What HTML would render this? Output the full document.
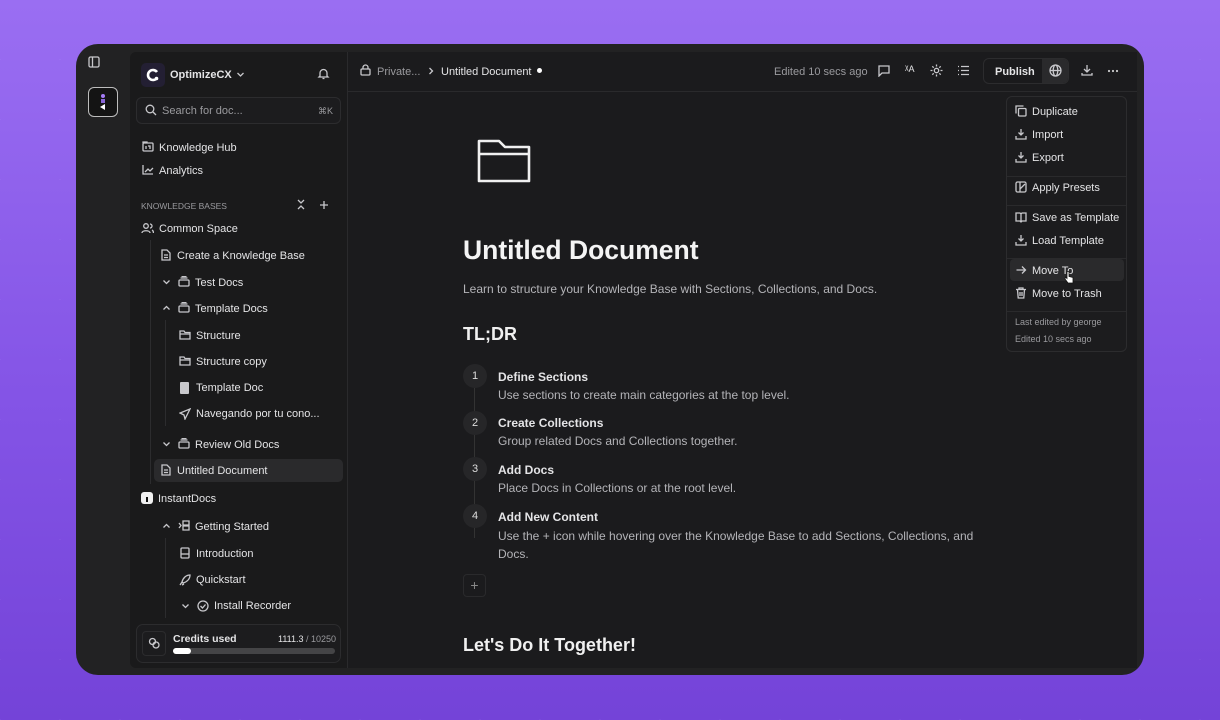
<!DOCTYPE html>
<html><head><meta charset="utf-8"><style>
*{box-sizing:border-box;margin:0;padding:0}
body{width:1220px;height:720px;overflow:hidden;font-family:"Liberation Sans",sans-serif;background:linear-gradient(180deg,#9a6ef2 0%,#8454e6 55%,#7443d8 100%);position:relative}
.pat{position:absolute;inset:0;background-image:linear-gradient(45deg,rgba(255,255,255,.05) 1px,transparent 1px),linear-gradient(-45deg,rgba(255,255,255,.05) 1px,transparent 1px);background-size:60px 60px}
.win{position:absolute;left:76px;top:44px;width:1068px;height:631px;border-radius:22px;background:#222223}
.a{position:absolute}
.side{position:absolute;left:130px;top:52px;width:218px;height:616px;background:#1a1a1b;border-right:1px solid #2a2a2c;border-radius:6px 0 0 6px}
.main{position:absolute;left:348px;top:52px;width:789px;height:616px;background:#1b1b1d}
.t{position:absolute;font-size:11px;color:#e4e4e6;white-space:nowrap;margin-top:1px}
.ic{position:absolute;stroke:#c8c8cc;fill:none;stroke-width:1.3}
.muted{color:#9a9a9e}
.menu{position:absolute;left:1006px;top:96px;width:121px;height:256px;background:#1c1c1e;border:1px solid #2c2c2e;border-radius:6px}
.sep{position:absolute;left:0;right:0;height:1px;background:#2a2a2c}
</style></head><body>
<div class="pat"></div>
<div class="win"></div>
<svg class="ic" style="left:88px;top:56px" width="12" height="12" viewBox="0 0 12 12"><rect x="1" y="1" width="10" height="10" rx="1.5"/><line x1="4.5" y1="1" x2="4.5" y2="11"/></svg>
<div class="a" style="left:88px;top:87px;width:30px;height:30px;border:1.5px solid #bdbdbd;border-radius:6px;background:#141414"></div>
<div class="a" style="left:101px;top:94px;width:4px;height:4px;border-radius:50%;background:#a57cf5"></div>
<div class="a" style="left:101px;top:99px;width:4px;height:4px;background:#8a66d8"></div>
<div class="a" style="left:100px;top:104px;width:0;height:0;border-top:3px solid transparent;border-bottom:3px solid transparent;border-right:5px solid #fff"></div>

<div class="side"></div>
<div class="a" style="left:141px;top:63px;width:24px;height:24px;border-radius:5px;background:#231f33"></div>
<svg class="a" style="left:146px;top:68px" width="14" height="14" viewBox="0 0 14 14"><path d="M11 4 A5 5 0 1 0 11 10" stroke="#fff" stroke-width="2.6" fill="none"/><circle cx="10.5" cy="10.5" r="1.8" fill="#fff"/></svg>
<div class="t" style="left:170px;top:68px;font-weight:bold;font-size:11px">OptimizeCX</div>
<svg class="ic" style="left:236px;top:70px" width="9" height="9" viewBox="0 0 9 9"><path d="M1.5 3l3 3 3-3"/></svg>
<svg class="ic" style="left:317px;top:67px" width="13" height="13" viewBox="0 0 13 13"><path d="M3 9V6a3.5 3.5 0 0 1 7 0v3l1 1H2z M5.5 11.5h2"/></svg>
<div class="a" style="left:136px;top:97px;width:205px;height:27px;border:1px solid #2c2c2e;border-radius:6px;background:#1c1c1e"></div>
<svg class="ic" style="left:145px;top:104px" width="12" height="12" viewBox="0 0 12 12"><circle cx="5" cy="5" r="3.8"/><path d="M8 8l3 3"/></svg>
<div class="t muted" style="left:162px;top:104px">Search for doc...</div>
<div class="t muted" style="left:318px;top:105px;font-size:9px">⌘K</div>
<svg class="ic" style="left:142px;top:141px" width="12" height="11" viewBox="0 0 12 11"><rect x="1" y="2" width="10" height="8" rx="1"/><path d="M1 2V1h4v1 M4 5v3 M6 5h2v3"/></svg>
<div class="t" style="left:159px;top:141px">Knowledge Hub</div>
<svg class="ic" style="left:142px;top:164px" width="12" height="11" viewBox="0 0 12 11"><path d="M1 1v9h10 M3 8l3-3 2 2 3-3"/></svg>
<div class="t" style="left:159px;top:164px">Analytics</div>
<div class="t muted" style="left:141px;top:200px;font-size:8.5px">KNOWLEDGE BASES</div>
<svg class="ic" style="left:296px;top:199px" width="10" height="11" viewBox="0 0 10 11"><path d="M2 1l3 3 3-3 M2 10l3-3 3 3"/></svg>
<svg class="ic" style="left:319px;top:200px" width="10" height="10" viewBox="0 0 10 10"><path d="M5 1v8 M1 5h8"/></svg>
<svg class="ic" style="left:141px;top:222px" width="13" height="12" viewBox="0 0 13 12"><circle cx="5" cy="4" r="2.3"/><path d="M1 11c0-3 8-3 8 0 M9 2a2 2 0 0 1 0 4 M11 8c1 .5 1.5 1.5 1.5 3"/></svg>
<div class="t" style="left:159px;top:222px">Common Space</div>
<div class="a" style="left:150px;top:240px;width:1px;height:244px;background:#2c2c2e"></div>
<svg class="ic" style="left:161px;top:249px" width="10" height="12" viewBox="0 0 10 12"><path d="M1 1h5l3 3v7H1z M3 6h4 M3 8.5h4"/></svg>
<div class="t" style="left:177px;top:249px">Create a Knowledge Base</div>
<svg class="ic" style="left:162px;top:278px" width="9" height="8" viewBox="0 0 9 8"><path d="M1.5 2.5l3 3 3-3"/></svg>
<svg class="ic" style="left:178px;top:276px" width="12" height="11" viewBox="0 0 12 11"><rect x="1" y="4" width="10" height="6" rx="1"/><path d="M2.5 2h7 M3.5 0.5h5"/></svg>
<div class="t" style="left:195px;top:276px">Test Docs</div>
<svg class="ic" style="left:162px;top:304px" width="9" height="8" viewBox="0 0 9 8"><path d="M1.5 5.5l3-3 3 3"/></svg>
<svg class="ic" style="left:178px;top:302px" width="12" height="11" viewBox="0 0 12 11"><rect x="1" y="4" width="10" height="6" rx="1"/><path d="M2.5 2h7 M3.5 0.5h5"/></svg>
<div class="t" style="left:195px;top:302px">Template Docs</div>
<div class="a" style="left:165px;top:320px;width:1px;height:106px;background:#2c2c2e"></div>
<svg class="ic" style="left:179px;top:330px" width="12" height="10" viewBox="0 0 12 10"><path d="M1 1h4l1 1.5h5V9H1z M1 4h10"/></svg>
<div class="t" style="left:196px;top:329px">Structure</div>
<svg class="ic" style="left:179px;top:356px" width="12" height="10" viewBox="0 0 12 10"><path d="M1 1h4l1 1.5h5V9H1z M1 4h10"/></svg>
<div class="t" style="left:196px;top:355px">Structure copy</div>
<div class="a" style="left:180px;top:382px;width:9px;height:12px;background:#c8c8cc;border-radius:1px"></div>
<div class="t" style="left:196px;top:381px">Template Doc</div>
<svg class="ic" style="left:179px;top:408px" width="12" height="12" viewBox="0 0 12 12"><path d="M11 1L1 5l4 2 1 4z"/></svg>
<div class="t" style="left:196px;top:407px">Navegando por tu cono...</div>
<svg class="ic" style="left:162px;top:440px" width="9" height="8" viewBox="0 0 9 8"><path d="M1.5 2.5l3 3 3-3"/></svg>
<svg class="ic" style="left:178px;top:438px" width="12" height="11" viewBox="0 0 12 11"><rect x="1" y="4" width="10" height="6" rx="1"/><path d="M2.5 2h7 M3.5 0.5h5"/></svg>
<div class="t" style="left:195px;top:438px">Review Old Docs</div>
<div class="a" style="left:154px;top:459px;width:189px;height:23px;border-radius:5px;background:#2a2a2c"></div>
<svg class="ic" style="left:161px;top:464px" width="10" height="12" viewBox="0 0 10 12"><path d="M1 1h5l3 3v7H1z M3 6h4 M3 8.5h4"/></svg>
<div class="t" style="left:177px;top:464px">Untitled Document</div>
<div class="a" style="left:141px;top:492px;width:12px;height:12px;border-radius:3px;background:#f0f0f0"></div>
<div class="a" style="left:146px;top:497px;width:2px;height:5px;background:#111"></div>
<div class="t" style="left:158px;top:492px">InstantDocs</div>
<svg class="ic" style="left:162px;top:522px" width="9" height="8" viewBox="0 0 9 8"><path d="M1.5 5.5l3-3 3 3"/></svg>
<svg class="ic" style="left:178px;top:520px" width="12" height="11" viewBox="0 0 12 11"><path d="M1 3l2 2.5L1 8 M5 1h6v4H5z M5 6h6v4H5z"/></svg>
<div class="t" style="left:195px;top:520px">Getting Started</div>
<div class="a" style="left:165px;top:538px;width:1px;height:80px;background:#2c2c2e"></div>
<svg class="ic" style="left:180px;top:547px" width="10" height="12" viewBox="0 0 10 12"><rect x="1" y="1" width="8" height="10" rx="1"/><path d="M1 7h8"/></svg>
<div class="t" style="left:196px;top:547px">Introduction</div>
<svg class="ic" style="left:179px;top:574px" width="12" height="12" viewBox="0 0 12 12"><path d="M11 1C7 1 4 4 3 8l1 1c4-1 7-4 7-8z M3 8l-2 3 M5 10l-2 1"/></svg>
<div class="t" style="left:196px;top:573px">Quickstart</div>
<svg class="ic" style="left:181px;top:602px" width="9" height="8" viewBox="0 0 9 8"><path d="M1.5 2.5l3 3 3-3"/></svg>
<svg class="ic" style="left:197px;top:600px" width="12" height="12" viewBox="0 0 12 12"><circle cx="6" cy="6" r="5"/><path d="M3.5 6l2 2 3-3.5"/></svg>
<div class="t" style="left:214px;top:599px">Install Recorder</div>
<div class="a" style="left:136px;top:624px;width:205px;height:39px;border:1px solid #2c2c2e;border-radius:7px;background:#1c1c1e"></div>
<div class="a" style="left:142px;top:631px;width:24px;height:25px;border:1px solid #2c2c2e;border-radius:4px"></div>
<svg class="ic" style="left:148px;top:637px" width="12" height="12" viewBox="0 0 12 12"><circle cx="4.5" cy="4.5" r="3"/><circle cx="8" cy="8" r="3"/></svg>
<div class="t" style="left:173px;top:632px;font-weight:bold;font-size:10.5px">Credits used</div>
<div class="t" style="left:278px;top:633px;font-size:9px">1111.3 <span class="muted">/ 10250</span></div>
<div class="a" style="left:173px;top:648px;width:162px;height:6px;border-radius:3px;background:#444446"></div>
<div class="a" style="left:173px;top:648px;width:18px;height:6px;border-radius:3px;background:#fff"></div>

<div class="main"></div>
<div class="a" style="left:348px;top:91px;width:789px;height:1px;background:#2a2a2c"></div>
<svg class="ic" style="left:360px;top:64px" width="11" height="12" viewBox="0 0 11 12"><rect x="1" y="5" width="9" height="6" rx="1"/><path d="M3 5V3.5a2.5 2.5 0 0 1 5 0V5"/></svg>
<div class="t muted" style="left:377px;top:65px">Private...</div>
<svg class="ic" style="left:428px;top:67px" width="6" height="8" viewBox="0 0 6 8"><path d="M1.5 1l3 3-3 3"/></svg>
<div class="t" style="left:441px;top:65px">Untitled Document</div>
<div class="a" style="left:537px;top:68px;width:5px;height:5px;border-radius:50%;background:#fff"></div>
<div class="t muted" style="left:774px;top:65px">Edited 10 secs ago</div>
<svg class="ic" style="left:878px;top:65px" width="12" height="12" viewBox="0 0 12 12"><path d="M1 1h10v7H4l-3 3z"/></svg>
<div class="t" style="left:905px;top:63px;font-size:10px">ᵡ<span style="font-size:9px">A</span></div>
<svg class="ic" style="left:930px;top:64px" width="13" height="13" viewBox="0 0 13 13"><circle cx="6.5" cy="6.5" r="2.2"/><path d="M6.5 .5v2 M6.5 10.5v2 M.5 6.5h2 M10.5 6.5h2 M2.3 2.3l1.4 1.4 M9.3 9.3l1.4 1.4 M2.3 10.7l1.4-1.4 M9.3 3.7l1.4-1.4"/></svg>
<svg class="ic" style="left:957px;top:65px" width="12" height="11" viewBox="0 0 12 11"><path d="M4 1.5h8 M4 5.5h8 M4 9.5h8 M1 1.5h1 M1 5.5h1 M1 9.5h1"/></svg>
<div class="a" style="left:983px;top:58px;width:86px;height:26px;border:1px solid #2c2c2e;border-radius:6px;background:#1a1a1c"></div>
<div class="a" style="left:1042px;top:59px;width:26px;height:24px;background:#2a2a2c;border-radius:0 5px 5px 0"></div>
<div class="t" style="left:995px;top:65px;font-weight:bold">Publish</div>
<svg class="ic" style="left:1049px;top:64px" width="13" height="13" viewBox="0 0 13 13"><circle cx="6.5" cy="6.5" r="5.5"/><ellipse cx="6.5" cy="6.5" rx="2.3" ry="5.5"/><path d="M1 6.5h11"/></svg>
<svg class="ic" style="left:1081px;top:64px" width="12" height="12" viewBox="0 0 12 12"><path d="M6 1v7 M3 5l3 3 3-3 M1 9v2h10V9"/></svg>
<svg class="a" style="left:1107px;top:69px" width="12" height="4" viewBox="0 0 12 4" fill="#ccc"><circle cx="2" cy="2" r="1.1"/><circle cx="6" cy="2" r="1.1"/><circle cx="10" cy="2" r="1.1"/></svg>

<svg class="a" style="left:476px;top:137px" width="56" height="48" viewBox="0 0 56 48" fill="none" stroke="#f0f0f0" stroke-width="2.6" stroke-linejoin="round"><path d="M3 4h20l6 6h24v34H3z M3 17h50"/></svg>
<div class="t" style="left:463px;top:234px;font-size:26.5px;font-weight:bold;color:#f4f4f4">Untitled Document</div>
<div class="t" style="left:463px;top:281px;font-size:12px;color:#b4b4b8">Learn to structure your Knowledge Base with Sections, Collections, and Docs.</div>
<div class="t" style="left:463px;top:323px;font-size:18px;font-weight:bold;color:#f0f0f0">TL;DR</div>
<div class="a" style="left:474px;top:388px;width:1px;height:150px;background:#333"></div>
<div class="a" style="left:463px;top:364px;width:24px;height:24px;border-radius:50%;background:#262628;color:#ddd;font-size:11px;text-align:center;line-height:24px">1</div>
<div class="a" style="left:463px;top:411px;width:24px;height:24px;border-radius:50%;background:#262628;color:#ddd;font-size:11px;text-align:center;line-height:24px">2</div>
<div class="a" style="left:463px;top:457px;width:24px;height:24px;border-radius:50%;background:#262628;color:#ddd;font-size:11px;text-align:center;line-height:24px">3</div>
<div class="a" style="left:463px;top:504px;width:24px;height:24px;border-radius:50%;background:#262628;color:#ddd;font-size:11px;text-align:center;line-height:24px">4</div>
<div class="t" style="left:498px;top:369px;font-size:12px;font-weight:bold">Define Sections</div>
<div class="t" style="left:498px;top:387px;font-size:12px;color:#b4b4b8">Use sections to create main categories at the top level.</div>
<div class="t" style="left:498px;top:415px;font-size:12px;font-weight:bold">Create Collections</div>
<div class="t" style="left:498px;top:433px;font-size:12px;color:#b4b4b8">Group related Docs and Collections together.</div>
<div class="t" style="left:498px;top:462px;font-size:12px;font-weight:bold">Add Docs</div>
<div class="t" style="left:498px;top:480px;font-size:12px;color:#b4b4b8">Place Docs in Collections or at the root level.</div>
<div class="t" style="left:498px;top:509px;font-size:12px;font-weight:bold">Add New Content</div>
<div class="t" style="left:498px;top:526px;font-size:12px;color:#b4b4b8;line-height:18px">Use the + icon while hovering over the Knowledge Base to add Sections, Collections, and<br>Docs.</div>
<div class="a" style="left:463px;top:574px;width:23px;height:23px;border:1px solid #2a2a2c;border-radius:4px;color:#888;text-align:center;line-height:21px;font-size:14px">+</div>
<div class="t" style="left:463px;top:634px;font-size:18px;font-weight:bold;color:#f0f0f0">Let's Do It Together!</div>

<div class="menu">
<div class="sep" style="top:79px"></div>
<div class="sep" style="top:108px"></div>
<div class="sep" style="top:161px"></div>
<div class="sep" style="top:214px"></div>
<div class="a" style="left:3px;top:162px;width:114px;height:22px;border-radius:4px;background:#2a2a2c"></div>
</div>
<svg class="ic" style="left:1015px;top:105px" width="12" height="12" viewBox="0 0 12 12"><rect x="3.5" y="3.5" width="7.5" height="7.5" rx="1"/><path d="M1 8.5V1h7.5"/></svg>
<div class="t" style="left:1032px;top:105px">Duplicate</div>
<svg class="ic" style="left:1015px;top:128px" width="12" height="12" viewBox="0 0 12 12"><path d="M6 1v6 M3.5 4.5L6 7l2.5-2.5 M1 8v3h10V8"/></svg>
<div class="t" style="left:1032px;top:128px">Import</div>
<svg class="ic" style="left:1015px;top:151px" width="12" height="12" viewBox="0 0 12 12"><path d="M6 1v6 M3.5 4.5L6 7l2.5-2.5 M1 8v3h10V8"/></svg>
<div class="t" style="left:1032px;top:151px">Export</div>
<svg class="ic" style="left:1015px;top:181px" width="12" height="12" viewBox="0 0 12 12"><rect x="1" y="1" width="10" height="10" rx="1.5"/><path d="M5 1v10 M5 8l5-5"/></svg>
<div class="t" style="left:1032px;top:181px">Apply Presets</div>
<svg class="ic" style="left:1015px;top:211px" width="12" height="12" viewBox="0 0 12 12"><path d="M1 2h4l1 1 1-1h4v8H7l-1 1-1-1H1z M6 3v8"/></svg>
<div class="t" style="left:1032px;top:211px">Save as Template</div>
<svg class="ic" style="left:1015px;top:234px" width="12" height="12" viewBox="0 0 12 12"><path d="M6 1v6 M3.5 4.5L6 7l2.5-2.5 M1 8v3h10V8"/></svg>
<div class="t" style="left:1032px;top:234px">Load Template</div>
<svg class="ic" style="left:1015px;top:264px" width="12" height="12" viewBox="0 0 12 12"><path d="M1.5 6h9 M7 2.5L10.5 6 7 9.5"/></svg>
<div class="t" style="left:1032px;top:264px">Move To</div>
<svg class="a" style="left:1064px;top:270px" width="10" height="14" viewBox="0 0 10 14"><path d="M3 1.5v7l-1.5-1.5L1 9l3 4h5V7.5l-4-1V1.5z" fill="#fff" stroke="#111" stroke-width="0.8"/></svg>
<svg class="ic" style="left:1015px;top:287px" width="12" height="12" viewBox="0 0 12 12"><path d="M1 2.5h10 M4 2.5V1h4v1.5 M2.5 2.5l.7 8.5h5.6l.7-8.5 M5 5v4 M7 5v4"/></svg>
<div class="t" style="left:1032px;top:287px">Move to Trash</div>
<div class="t muted" style="left:1015px;top:316px;font-size:9px">Last edited by george</div>
<div class="t muted" style="left:1015px;top:333px;font-size:9px">Edited 10 secs ago</div>
</body></html>
